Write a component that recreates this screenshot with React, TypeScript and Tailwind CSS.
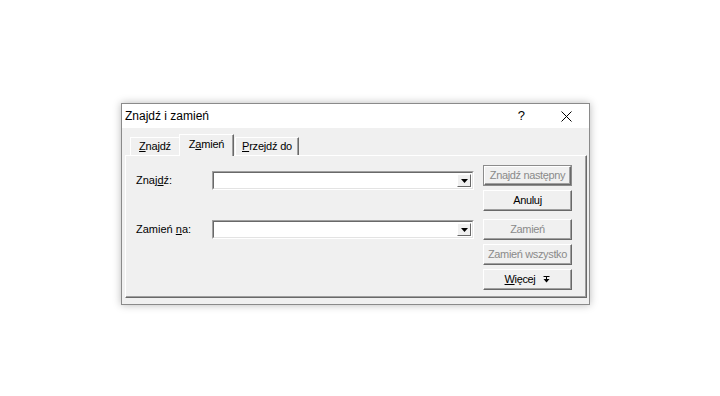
import React from "react";

const font = { fontFamily: '"Liberation Sans", Arial, sans-serif' };

function Raised({ children, disabled, isDefault, className = "" }: { children: React.ReactNode; disabled?: boolean; isDefault?: boolean; className?: string }) {
    return (
        <div className={`w-[89px] h-[21px] ${isDefault ? "border border-[#8c8c8c]" : ""} ${className}`}>
            <div className={`h-full w-full flex items-center justify-center bg-[#f0f0f0] border-t border-l border-white border-r border-b border-r-[#696969] border-b-[#696969] shadow-[inset_-1px_-1px_0_#a0a0a0] text-[11px] tracking-[-0.35px] whitespace-nowrap ${disabled ? "text-[#8a8a8a]" : "text-black"}`}>
                {children}
            </div>
        </div>
    );
}

function Combo() {
    return (
        <div className="w-[262px] h-[19px] border-t border-l border-[#a0a0a0] border-r border-b border-r-white border-b-white">
            <div className="h-full w-full bg-white border-t border-l border-[#696969] border-r border-b border-r-[#e3e3e3] border-b-[#e3e3e3] flex justify-end items-stretch p-px">
                <div className="w-[14px] bg-[#f0f0f0] border-t border-l border-white border-r border-b border-r-[#696969] border-b-[#696969] flex items-center justify-center">
                    <svg width="7" height="4" viewBox="0 0 7 4">
                        <path d="M0 0H7L3.5 4Z" fill="#000" />
                    </svg>
                </div>
            </div>
        </div>
    );
}

export default function App() {
    return (
        <div className="w-[720px] h-[396px] bg-white pt-[103px] pl-[121px]" style={font}>
            <div className="w-[469px] h-[202px] bg-[#f0f0f0] border border-[#8a8a8a] shadow-[0_0_8px_rgba(0,0,0,0.28)] flex flex-col">
                {/* title bar */}
                <div className="h-[24px] bg-white flex items-center pl-[3px] pr-[17px]">
                    <span className="text-[12px] text-black">Znajdź i zamień</span>
                    <span className="ml-auto text-[13px] text-black mr-[36px]">?</span>
                    <svg width="11" height="11" viewBox="0 0 11 11">
                        <path d="M0.5 0.5L10.5 10.5M10.5 0.5L0.5 10.5" stroke="#000" strokeWidth="1" />
                    </svg>
                </div>

                {/* tabs */}
                <div className="mt-[6px] h-[21px] flex items-end pl-[8px] text-[11px] text-black tracking-[-0.2px]">
                    <div className="h-[18px] w-[49px] flex items-center justify-center border-t border-l border-white">
                        <span><u>Z</u>najdź</span>
                    </div>
                    <div className="relative z-10 -mb-px h-[22px] w-[55px] bg-[#f0f0f0] flex items-center justify-center border-t border-l border-white border-r border-r-[#696969] shadow-[inset_-1px_0_0_#a0a0a0] pb-[2px]">
                        <span>Z<u>a</u>mień</span>
                    </div>
                    <div className="ml-px h-[18px] w-[64px] flex items-center justify-center border-t border-l border-white border-r border-r-[#696969] shadow-[inset_-1px_0_0_#a0a0a0]">
                        <span><u>P</u>rzejdź do</span>
                    </div>
                </div>

                {/* panel */}
                <div className="ml-[3px] w-[462px] h-[143px] flex border-t border-l border-white border-r border-b border-r-[#696969] border-b-[#696969] shadow-[inset_-1px_-1px_0_#a0a0a0] text-[11px] text-black">
                    <div className="flex flex-col pl-[10px] pt-[15px]">
                        <div className="flex items-center">
                            <span className="w-[76px]">Znaj<u>d</u>ź:</span>
                            <Combo />
                        </div>
                        <div className="flex items-center mt-[30px]">
                            <span className="w-[76px]">Zamień <u>n</u>a:</span>
                            <Combo />
                        </div>
                    </div>
                    <div className="flex flex-col ml-[9px] pt-[9px]">
                        <Raised disabled isDefault>Znajdź następny</Raised>
                        <Raised className="mt-[4px]">Anuluj</Raised>
                        <Raised disabled className="mt-[8px]">Zamień</Raised>
                        <Raised disabled className="mt-[4px]">Zamień wszystko</Raised>
                        <Raised className="mt-[4px]">
                            <span><u>W</u>ięcej</span>
                            <svg className="ml-[8px]" width="7" height="7" viewBox="0 0 7 7">
                                <path d="M0.5 0.5H6.5" stroke="#000" strokeWidth="1" />
                                <path d="M3.5 1V3" stroke="#000" strokeWidth="1" />
                                <path d="M0.5 3H6.5L3.5 6.5Z" fill="#000" />
                            </svg>
                        </Raised>
                    </div>
                </div>
            </div>
        </div>
    );
}
